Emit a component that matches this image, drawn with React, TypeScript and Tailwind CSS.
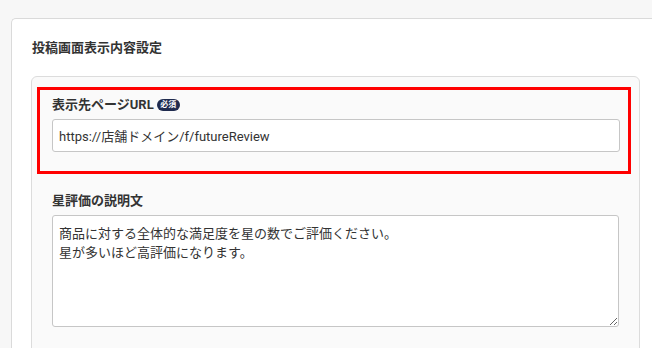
import React from 'react';

// ========== Post screen display settings ==========
const font = { fontFamily: '"Roboto", "Noto Sans CJK JP", sans-serif' };

const RequiredBadge = () => (
  <span className="ml-[3px] inline-flex items-center justify-center h-[12px] w-[23px] rounded-full bg-[#1f2b4f] text-white text-[8px] font-bold leading-none">
    必須
  </span>
);

export default function App() {
  return (
    <div className="w-[652px] h-[348px] overflow-hidden bg-[#f7f7f7] pt-[18px] pl-[11px]" style={font}>
      <div className="h-[400px] bg-white border-l border-t border-[#dadada] rounded-tl-[5px] pl-[19px] pt-[19px]">
        <h1 className="pl-[1px] text-[13px] leading-[20px] font-bold text-[#333]">投稿画面表示内容設定</h1>

        <div className="mt-[18px] w-[609px] h-[300px] bg-[#fafafa] border border-[#dcdcdc] rounded-[6px] pt-[10px]">
          {/* Highlighted field */}
          <div className="ml-[5px] mr-[8px] border-[3px] border-[#ff0000] pl-[12px] pr-[8px] pt-[5px] pb-[19px]">
            <div className="flex items-center h-[20px] text-[13px] font-bold text-[#333]">
              表示先ページURL
              <RequiredBadge />
            </div>
            <input
              readOnly
              defaultValue="https://店舗ドメイン/f/futureReview"
              className="mt-[4px] block w-full h-[33px] bg-white border border-[#c6c6c6] rounded-[3px] px-[6px] text-[13px] text-[#333] outline-none"
              style={font}
            />
          </div>

          <div className="ml-[20px] mr-[20px] mt-[17px]">
            <div className="h-[20px] flex items-center text-[13px] font-bold text-[#333]">星評価の説明文</div>
            <textarea
              readOnly
              defaultValue={'商品に対する全体的な満足度を星の数でご評価ください。\n星が多いほど高評価になります。'}
              className="mt-[4px] block w-full h-[112px] bg-white border border-[#c6c6c6] rounded-[3px] px-[6px] pt-[8px] text-[13px] leading-[19px] text-[#333] outline-none"
              style={font}
            />
          </div>
        </div>
      </div>
    </div>
  );
}
